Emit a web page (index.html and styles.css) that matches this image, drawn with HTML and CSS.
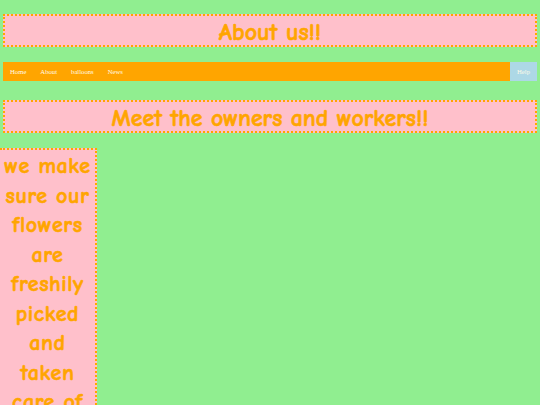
FILE: index.html
```html
<!DOCTYPE html>
<html>
<head>
<meta charset="utf-8">
<title>About us</title>
<link rel="stylesheet" href="styles.css">
</head>
<body>
<header class="title">
  <h1 class="title-text">About us!!</h1>
</header>
<nav class="nav">
  <ul class="nav-list">
    <li class="nav-item"><a class="nav-link" href="#">Home</a></li>
    <li class="nav-item"><a class="nav-link" href="#">About</a></li>
    <li class="nav-item"><a class="nav-link" href="#">balloons</a></li>
    <li class="nav-item"><a class="nav-link" href="#">News</a></li>
    <li class="nav-item nav-help"><a class="nav-link" href="#">Help</a></li>
  </ul>
</nav>
<section class="title title-sub">
  <h2 class="title-text title-text-sub">Meet the owners and workers!!</h2>
</section>
<div class="side">
  <p class="side-text">we make sure our flowers are freshily picked and taken care of with love and respect</p>
</div>
</body>
</html>
```
FILE: styles.css
```css
html, body {
  margin: 0;
  padding: 0;
}
body {
  background: #90ee90;
  font-family: "Comic Sans MS", "Comic Neue", "Lato", sans-serif;
  overflow: hidden;
}
.title {
  margin: 14px 3px 0;
  background: #ffc0cb;
  border: 2px dotted #ffa500;
  height: 29px;
  display: flex;
  align-items: center;
  justify-content: center;
}
.title-text {
  margin: 0;
  padding-top: 3px;
  color: #ffa500;
  font-size: 24px;
  font-weight: bold;
  line-height: 29px;
  -webkit-text-stroke: 0.6px #ffa500;
}
.title-sub {
  margin-top: 19px;
}
.title-text-sub {
  font-size: 23.8px;
}
.nav {
  margin: 15px 3px 0;
}
.nav-list {
  list-style: none;
  margin: 0;
  padding: 0;
  display: flex;
  background: #ffa500;
  height: 19px;
}
.nav-item {
  display: flex;
}
.nav-link {
  display: flex;
  align-items: center;
  padding: 0 7px;
  color: #fffbe8;
  text-decoration: none;
  font-family: "Liberation Serif", serif;
  font-size: 6.7px;
}
.nav-help {
  margin-left: auto;
  background: #add8e6;
}
.side {
  margin-top: 15px;
  width: 95px;
  background: #ffc0cb;
  border: 2px dotted #ffa500;
  border-left: none;
}
.side-text {
  margin: 0;
  padding-top: 2px;
  color: #ffa500;
  font-size: 22px;
  font-weight: bold;
  line-height: 29.5px;
  letter-spacing: 0.6px;
  text-align: center;
  -webkit-text-stroke: 0.6px #ffa500;
}
```
